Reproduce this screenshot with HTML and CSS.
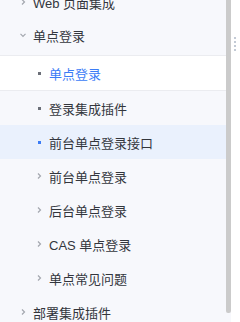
FILE: index.html
```html
<!DOCTYPE html>
<html lang="zh">
<head>
    <meta charset="UTF-8">
    <meta name="viewport" content="width=device-width, initial-scale=1.0">
    <title>单点登录</title>
    <link rel="stylesheet" href="styles.css">
</head>
<body>
    <div class="layout">
        <nav class="sidebar">
            <ul class="menu">
                <li class="menu-title">
                    <span class="marker"><svg width="8" height="8" viewBox="0 0 8 8"><path d="M3 1.5L5.5 4L3 6.5" /></svg></span>
                    Web 页面集成
                </li>
                <li>
                    <div class="menu-title open">
                        <span class="marker"><svg width="8" height="8" viewBox="0 0 8 8"><path d="M1.5 2.8L4 5.3L6.5 2.8" /></svg></span>
                        单点登录
                    </div>
                    <ul class="submenu">
                        <li class="sub-item current"><span class="marker"><span class="dot"></span></span>单点登录</li>
                        <li class="sub-item"><span class="marker"><span class="dot"></span></span>登录集成插件</li>
                        <li class="sub-item active"><span class="marker"><span class="dot"></span></span>前台单点登录接口</li>
                        <li class="sub-item"><span class="marker"><svg width="8" height="8" viewBox="0 0 8 8"><path d="M3 1.5L5.5 4L3 6.5" /></svg></span>前台单点登录</li>
                        <li class="sub-item"><span class="marker"><svg width="8" height="8" viewBox="0 0 8 8"><path d="M3 1.5L5.5 4L3 6.5" /></svg></span>后台单点登录</li>
                        <li class="sub-item"><span class="marker"><svg width="8" height="8" viewBox="0 0 8 8"><path d="M3 1.5L5.5 4L3 6.5" /></svg></span>CAS 单点登录</li>
                        <li class="sub-item"><span class="marker"><svg width="8" height="8" viewBox="0 0 8 8"><path d="M3 1.5L5.5 4L3 6.5" /></svg></span>单点常见问题</li>
                    </ul>
                </li>
                <li class="menu-title">
                    <span class="marker"><svg width="8" height="8" viewBox="0 0 8 8"><path d="M3 1.5L5.5 4L3 6.5" /></svg></span>
                    部署集成插件
                </li>
            </ul>
        </nav>
        <div class="scrollbar"><div class="thumb"></div></div>
        <div class="resizer">
            <span class="grip"></span>
            <span class="grip"></span>
            <span class="grip"></span>
            <span class="grip"></span>
        </div>
    </div>
</body>
</html>
```

FILE: styles.css
```css
body {
    margin: 0;
    font-family: "Liberation Sans", "Noto Sans CJK SC", sans-serif;
    font-size: 13px;
    color: #33363d;
    background-color: #ffffff;
    overflow: hidden;
}
.layout {
    display: flex;
    height: 322px;
}
.sidebar {
    width: 226px;
    background-color: #f7f8fc;
    overflow: hidden;
}
.menu, .submenu {
    list-style: none;
    margin: 0;
    padding: 0;
}
.menu {
    margin-top: -15px;
}
.menu-title {
    display: flex;
    align-items: center;
    height: 34px;
    padding-left: 19px;
}
.menu-title.open {
    height: 32px;
    padding-bottom: 4px;
}
.marker {
    width: 14px;
    display: flex;
    align-items: center;
    flex-shrink: 0;
}
.marker svg path {
    fill: none;
    stroke: #a3a7ae;
    stroke-width: 1.2;
}
.sub-item {
    display: flex;
    align-items: center;
    height: 34px;
    padding-left: 35px;
}
.dot {
    width: 3px;
    height: 3px;
    margin-left: 3px;
    background-color: #6b6f78;
}
.sub-item.current {
    background-color: #ffffff;
    border-top: 1px solid #ebecf0;
    border-bottom: 1px solid #ebecf0;
    color: #3b7cf6;
}
.sub-item.active {
    background-color: #eaf1fd;
}
.sub-item.active .dot {
    background-color: #3b7cf6;
}
.scrollbar {
    width: 5px;
    background-color: #f7f8fc;
}
.thumb {
    height: 313px;
    background-color: #cbcbcb;
    border-radius: 0 0 2px 2px;
}
.resizer {
    flex: 1;
    display: flex;
    flex-direction: column;
    gap: 2px;
    padding: 37px 0 0 3px;
}
.grip {
    width: 2px;
    height: 2px;
    background-color: #c3cad5;
}
```
